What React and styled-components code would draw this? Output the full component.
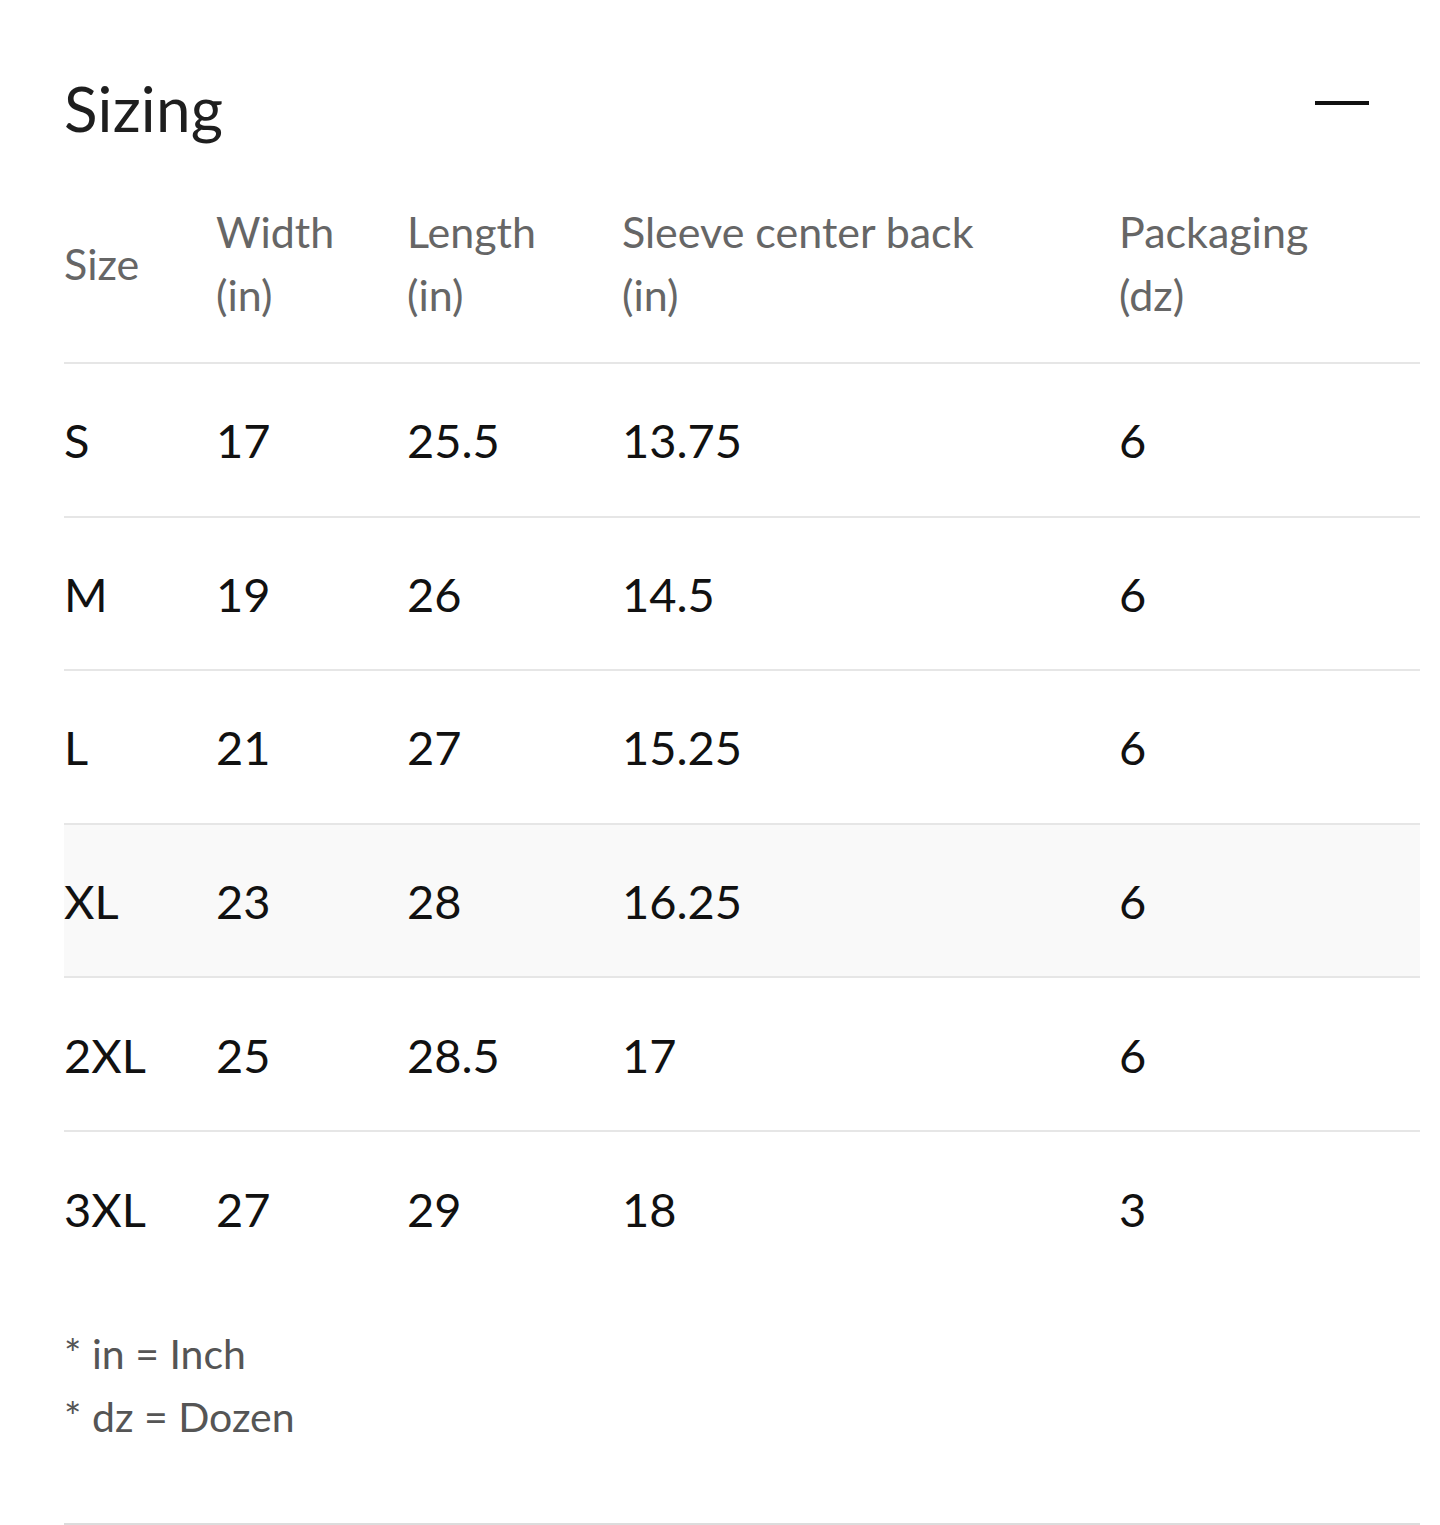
import React from 'react'
import styled, { createGlobalStyle } from 'styled-components'

const GlobalStyle = createGlobalStyle`
  html, body {
    margin: 0;
    padding: 0;
    background: #fff;
  }
  body {
    font-family: Lato, "Open Sans", sans-serif;
    color: #111;
  }
`

const Section = styled.section`
  width: 1440px;
  box-sizing: border-box;
  padding: 60px 20px 0 64px;
`

const Header = styled.div`
  display: flex;
  align-items: center;
  justify-content: space-between;
  height: 96px;
  padding-right: 51px;
`

const Title = styled.h2`
  margin: 0;
  font-size: 62px;
  font-weight: 400;
  color: #1e1e1e;
  letter-spacing: 0.2px;
`

const Minus = styled.button`
  width: 54px;
  height: 40px;
  border: 0;
  background: none;
  padding: 0;
  display: flex;
  align-items: center;
  cursor: pointer;
  margin-top: -10px;

  &::before {
    content: '';
    display: block;
    width: 54px;
    height: 4px;
    background: #111;
  }
`

const Table = styled.table`
  width: 100%;
  border-collapse: collapse;
  margin-top: 38px;
  table-layout: fixed;
`

const HeadCell = styled.th`
  text-align: left;
  vertical-align: middle;
  font-weight: 400;
  font-size: 43px;
  line-height: 63px;
  color: #666;
  padding: 6px 0 36px 0;
  width: ${p => p.$w}px;
`

const Row = styled.tr`
  border-top: 2px solid #e6e6e6;
  background: ${p => (p.$active ? '#f9f9f9' : 'transparent')};
`

const Cell = styled.td`
  font-size: 47px;
  height: 153.6px;
  padding: 1px 0 0 0;
  box-sizing: border-box;
  vertical-align: middle;
  color: #111;
`

const Notes = styled.div`
  padding-top: 37px;
  padding-bottom: 75px;
  border-bottom: 2px solid #dcdcdc;
`

const Note = styled.div`
  font-size: 41px;
  line-height: 63px;
  color: #555;
`

const columns = [
  { label: 'Size', w: 152 },
  { label: ['Width', '(in)'], w: 191 },
  { label: ['Length', '(in)'], w: 215 },
  { label: ['Sleeve center back', '(in)'], w: 497 },
  { label: ['Packaging', '(dz)'], w: 301 },
]

const rows = [
  ['S', '17', '25.5', '13.75', '6'],
  ['M', '19', '26', '14.5', '6'],
  ['L', '21', '27', '15.25', '6'],
  ['XL', '23', '28', '16.25', '6'],
  ['2XL', '25', '28.5', '17', '6'],
  ['3XL', '27', '29', '18', '3'],
]

export default function App() {
  return (
    <>
      <GlobalStyle />
      <Section>
        <Header>
          <Title>Sizing</Title>
          <Minus aria-label="Collapse" />
        </Header>
        <Table>
          <thead>
            <tr>
              {columns.map((c, i) => (
                <HeadCell key={i} $w={c.w}>
                  {Array.isArray(c.label) ? (
                    <>
                      {c.label[0]}
                      <br />
                      {c.label[1]}
                    </>
                  ) : (
                    c.label
                  )}
                </HeadCell>
              ))}
            </tr>
          </thead>
          <tbody>
            {rows.map((r, i) => (
              <Row key={r[0]} $active={i === 3}>
                {r.map((v, j) => (
                  <Cell key={j}>{v}</Cell>
                ))}
              </Row>
            ))}
          </tbody>
        </Table>
        <Notes>
          <Note>* in = Inch</Note>
          <Note>* dz = Dozen</Note>
        </Notes>
      </Section>
    </>
  )
}
